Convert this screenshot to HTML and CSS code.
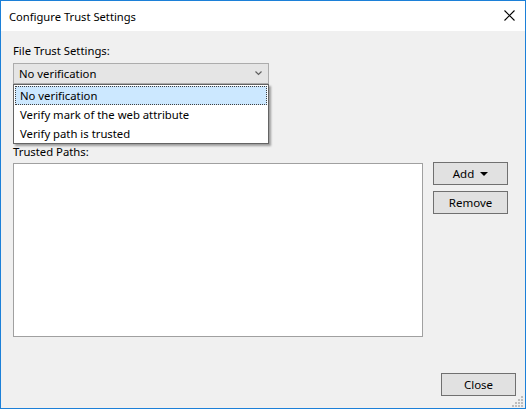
FILE: index.html
```html
<!DOCTYPE html>
<html>
<head>
<meta charset="utf-8">
<link rel="stylesheet" href="styles.css">
</head>
<body>
<div class="window">
  <div class="titlebar">
    <span class="title">Configure Trust Settings</span>
    <svg class="close-x" width="11" height="11" viewBox="0 0 11 11"><path d="M0.5 0.5 L10.5 10.5 M10.5 0.5 L0.5 10.5" stroke="#000" stroke-width="1.1" fill="none"/></svg>
  </div>
  <div class="content">
    <div class="label first">File Trust Settings:</div>
    <div class="combo">
      <span>No verification</span>
      <svg class="chev" width="7" height="5" viewBox="0 0 7 5"><path d="M0.5 0.5 L3.5 3.5 L6.5 0.5" stroke="#606060" stroke-width="1.2" fill="none"/></svg>
    </div>
    <div class="label second">Trusted Paths:</div>
    <div class="main-row">
      <div class="listbox"></div>
      <div class="side-buttons">
        <button class="btn">Add <svg class="tri" width="8" height="4" viewBox="0 0 8 4"><path d="M0 0 H8 L4 4 Z" fill="#000"/></svg></button>
        <button class="btn">Remove</button>
      </div>
    </div>
    <div class="footer">
      <button class="btn close-btn">Close</button>
    </div>
    <div class="dropdown">
      <div class="item selected">No verification</div>
      <div class="item">Verify mark of the web attribute</div>
      <div class="item">Verify path is trusted</div>
    </div>
    <svg class="grip" width="12" height="12" viewBox="0 0 12 12">
      <rect x="9" y="1" width="2" height="2" fill="#bdbdbd"/>
      <rect x="6" y="4" width="2" height="2" fill="#bdbdbd"/>
      <rect x="9" y="4" width="2" height="2" fill="#bdbdbd"/>
      <rect x="3" y="7" width="2" height="2" fill="#bdbdbd"/>
      <rect x="6" y="7" width="2" height="2" fill="#bdbdbd"/>
      <rect x="9" y="7" width="2" height="2" fill="#bdbdbd"/>
      <rect x="0" y="10" width="2" height="2" fill="#bdbdbd"/>
      <rect x="3" y="10" width="2" height="2" fill="#bdbdbd"/>
      <rect x="6" y="10" width="2" height="2" fill="#bdbdbd"/>
      <rect x="9" y="10" width="2" height="2" fill="#bdbdbd"/>
    </svg>
  </div>
</div>
</body>
</html>
```
FILE: styles.css
```css
* { box-sizing: border-box; }
html, body { margin: 0; padding: 0; }
body {
  font-family: "Noto Sans", "Open Sans", sans-serif;
  font-size: 11.3px;
  color: #000;
  background: #f0f0f0;
}
.window {
  width: 526px;
  height: 409px;
  border: 1px solid #1c80d8;
  display: flex;
  flex-direction: column;
  background: #f0f0f0;
}
.titlebar {
  height: 30px;
  background: #fff;
  display: flex;
  align-items: center;
  justify-content: space-between;
  padding: 0 10px 0 8px;
  flex: none;
}
.title { font-size: 11.2px; line-height: 15px; }
.close-x { display: block; margin-top: -1px; }
.content {
  flex: 1;
  position: relative;
  padding: 12px 9px 12px 12px;
  display: flex;
  flex-direction: column;
}
.label { line-height: 15px; height: 15px; }
.combo {
  margin-top: 5px;
  width: 256px;
  height: 21px;
  background: #e5e5e5;
  border: 1px solid #acacac;
  display: flex;
  align-items: center;
  justify-content: space-between;
  padding: 0 6px 0 5px;
}
.chev { display: block; }
.label.second { margin-top: 60px; }
.main-row {
  margin-top: 4px;
  display: flex;
  align-items: flex-start;
}
.listbox {
  width: 410px;
  height: 174px;
  background: #fff;
  border: 1px solid #a0a0a0;
}
.side-buttons {
  margin-left: 10px;
  margin-top: -1px;
  display: flex;
  flex-direction: column;
  gap: 6px;
}
.btn {
  width: 75px;
  height: 23px;
  background: #e1e1e1;
  border: 1px solid #707070;
  font-family: inherit;
  font-size: 11.5px;
  color: #000;
  padding: 0;
  display: flex;
  align-items: center;
  justify-content: center;
  gap: 6px;
}
.tri { display: block; }
.footer {
  margin-top: auto;
  display: flex;
  justify-content: flex-end;
}
.dropdown {
  position: absolute;
  left: 12px;
  top: 53px;
  width: 256px;
  background: #fff;
  border: 1px solid #646464;
  box-shadow: 2px 2px 2px rgba(0,0,0,0.35);
  padding: 1px 1px 0 1px;
}
.item {
  height: 19px;
  line-height: 17px;
  padding: 0 4px;
  border: 1px solid transparent;
}
.item.selected {
  background: #cce8ff;
  border: 1px dotted #404040;
}
.grip {
  position: absolute;
  right: 1px;
  bottom: 1px;
}
```
